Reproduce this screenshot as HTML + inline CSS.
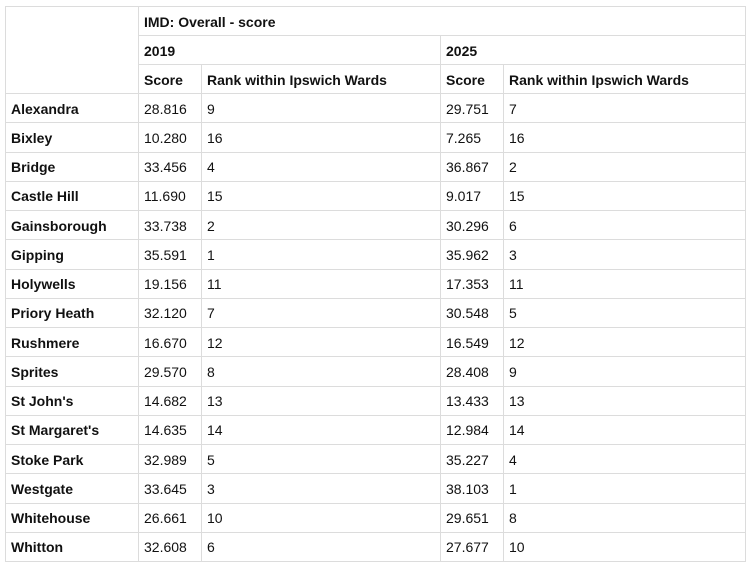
<!DOCTYPE html>
<html><head><meta charset="utf-8"><style>
html,body{margin:0;padding:0;background:#fff;}
table{position:absolute;left:5px;top:6px;border-collapse:collapse;table-layout:fixed;font-family:"Liberation Sans",sans-serif;font-size:14px;color:#111;}
td{border:1px solid #dcdcdc;padding:1px 0 0 5px;height:27px;white-space:nowrap;overflow:hidden;}
tbody tr td{height:27.25px;}
.b{font-weight:bold;}
</style></head><body>
<table>
<colgroup><col style="width:133px"><col style="width:63px"><col style="width:239px"><col style="width:63px"><col style="width:242px"></colgroup>
<thead>
<tr><td rowspan="3"></td><td colspan="4" class="b">IMD: Overall - score</td></tr>
<tr><td colspan="2" class="b">2019</td><td colspan="2" class="b">2025</td></tr>
<tr><td class="b">Score</td><td class="b">Rank within Ipswich Wards</td><td class="b">Score</td><td class="b">Rank within Ipswich Wards</td></tr>
</thead>
<tbody>
<tr><td class="b">Alexandra</td><td>28.816</td><td>9</td><td>29.751</td><td>7</td></tr>
<tr><td class="b">Bixley</td><td>10.280</td><td>16</td><td>7.265</td><td>16</td></tr>
<tr><td class="b">Bridge</td><td>33.456</td><td>4</td><td>36.867</td><td>2</td></tr>
<tr><td class="b">Castle Hill</td><td>11.690</td><td>15</td><td>9.017</td><td>15</td></tr>
<tr><td class="b">Gainsborough</td><td>33.738</td><td>2</td><td>30.296</td><td>6</td></tr>
<tr><td class="b">Gipping</td><td>35.591</td><td>1</td><td>35.962</td><td>3</td></tr>
<tr><td class="b">Holywells</td><td>19.156</td><td>11</td><td>17.353</td><td>11</td></tr>
<tr><td class="b">Priory Heath</td><td>32.120</td><td>7</td><td>30.548</td><td>5</td></tr>
<tr><td class="b">Rushmere</td><td>16.670</td><td>12</td><td>16.549</td><td>12</td></tr>
<tr><td class="b">Sprites</td><td>29.570</td><td>8</td><td>28.408</td><td>9</td></tr>
<tr><td class="b">St John's</td><td>14.682</td><td>13</td><td>13.433</td><td>13</td></tr>
<tr><td class="b">St Margaret's</td><td>14.635</td><td>14</td><td>12.984</td><td>14</td></tr>
<tr><td class="b">Stoke Park</td><td>32.989</td><td>5</td><td>35.227</td><td>4</td></tr>
<tr><td class="b">Westgate</td><td>33.645</td><td>3</td><td>38.103</td><td>1</td></tr>
<tr><td class="b">Whitehouse</td><td>26.661</td><td>10</td><td>29.651</td><td>8</td></tr>
<tr><td class="b">Whitton</td><td>32.608</td><td>6</td><td>27.677</td><td>10</td></tr>
</tbody>
</table>
</body></html>
